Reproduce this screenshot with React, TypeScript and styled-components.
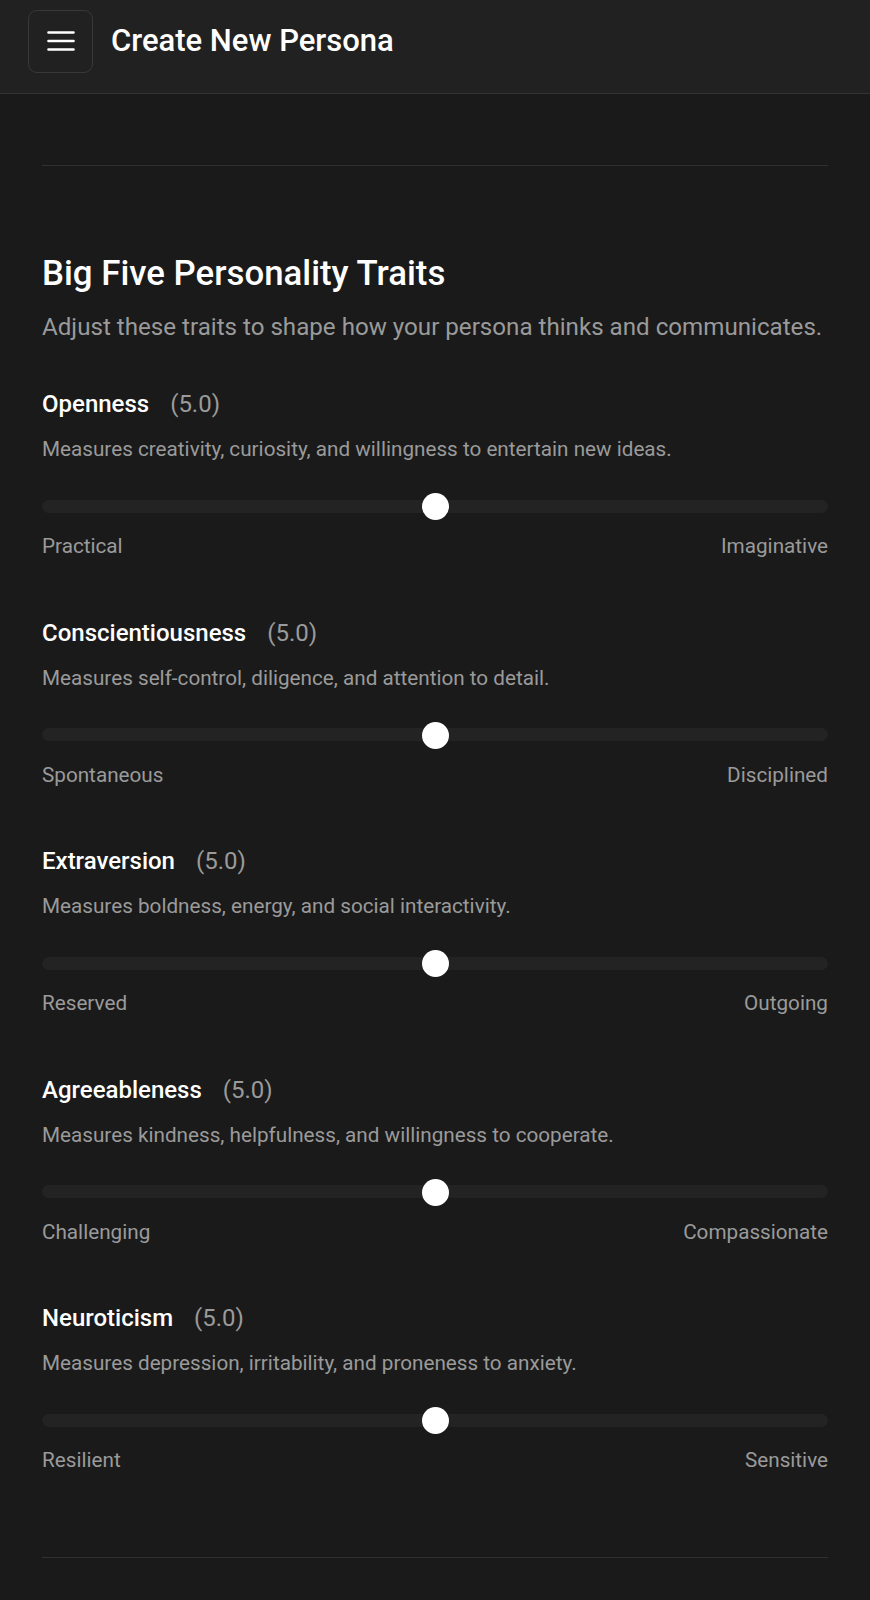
import React from "react";
import styled, { createGlobalStyle } from "styled-components";

const GlobalStyle = createGlobalStyle`
  html, body {
    margin: 0;
    padding: 0;
    background: #1a1a1a;
  }
  body {
    font-family: Roboto, "Liberation Sans", Arial, sans-serif;
    color: #ffffff;
    -webkit-font-smoothing: antialiased;
  }
  * { box-sizing: border-box; }
`;

const Page = styled.div`
  min-height: 1600px;
  background: #1a1a1a;
`;

const Header = styled.header`
  display: flex;
  align-items: center;
  gap: 18px;
  height: 94px;
  padding: 10px 28px 21px;
  background: #212121;
  border-bottom: 1px solid #333333;
`;

const MenuButton = styled.button`
  display: flex;
  align-items: center;
  justify-content: center;
  width: 65px;
  height: 63px;
  padding: 0;
  background: transparent;
  border: 1.5px solid #383838;
  border-radius: 9px;
  cursor: pointer;
`;

const Title = styled.h1`
  margin: 0;
  font-size: 31px;
  font-weight: 500;
  line-height: 36px;
  color: #ffffff;
`;

const Main = styled.main`
  padding: 0 42px;
`;

const Divider = styled.hr<{ $top: number }>`
  margin: ${(p) => p.$top}px 0 0;
  border: none;
  height: 1px;
  background: #303030;
`;

const Section = styled.section`
  display: flex;
  flex-direction: column;
  padding-top: 89px;
`;

const SectionTitle = styled.h2`
  margin: 0;
  font-size: 34.8px;
  line-height: 36px;
  font-weight: 500;
  color: #ffffff;
`;

const SectionSubtitle = styled.p`
  margin: 22px 0 0;
  font-size: 24.15px;
  line-height: 28px;
  color: #9a9a9a;
`;

const TraitList = styled.div`
  display: flex;
  flex-direction: column;
  gap: 59.5px;
  margin-top: 49px;
`;

const Trait = styled.div`
  display: flex;
  flex-direction: column;
`;

const TraitHeading = styled.div`
  display: flex;
  align-items: baseline;
  gap: 21px;
  line-height: 28px;
`;

const TraitName = styled.span`
  font-size: 24px;
  font-weight: 500;
  color: #ffffff;
`;

const TraitValue = styled.span`
  font-size: 24px;
  color: #9a9a9a;
`;

const TraitDescription = styled.p`
  margin: 18px 0 0;
  font-size: 20.7px;
  line-height: 26px;
  color: #9a9a9a;
`;

const SliderTrack = styled.div`
  position: relative;
  display: flex;
  align-items: center;
  height: 28px;
  margin-top: 30px;

  &::before {
    content: "";
    flex: 1;
    height: 13px;
    border-radius: 7px;
    background: #232323;
  }
`;

const Thumb = styled.div`
  position: absolute;
  top: 1px;
  width: 27px;
  height: 27px;
  margin-left: -13.5px;
  border-radius: 50%;
  background: #ffffff;
`;

const Ends = styled.div`
  display: flex;
  justify-content: space-between;
  margin-top: 13px;
  font-size: 20.7px;
  line-height: 26px;
  color: #9a9a9a;
`;

type TraitData = {
  name: string;
  value: number;
  description: string;
  low: string;
  high: string;
};

const traits: TraitData[] = [
  {
    name: "Openness",
    value: 5,
    description:
      "Measures creativity, curiosity, and willingness to entertain new ideas.",
    low: "Practical",
    high: "Imaginative",
  },
  {
    name: "Conscientiousness",
    value: 5,
    description: "Measures self-control, diligence, and attention to detail.",
    low: "Spontaneous",
    high: "Disciplined",
  },
  {
    name: "Extraversion",
    value: 5,
    description: "Measures boldness, energy, and social interactivity.",
    low: "Reserved",
    high: "Outgoing",
  },
  {
    name: "Agreeableness",
    value: 5,
    description:
      "Measures kindness, helpfulness, and willingness to cooperate.",
    low: "Challenging",
    high: "Compassionate",
  },
  {
    name: "Neuroticism",
    value: 5,
    description:
      "Measures depression, irritability, and proneness to anxiety.",
    low: "Resilient",
    high: "Sensitive",
  },
];

const MenuIcon = () => (
  <svg width="28" height="22" viewBox="0 0 28 22" fill="none">
    <path
      d="M1.5 2.5h25M1.5 11h25M1.5 19.5h25"
      stroke="#ffffff"
      strokeWidth="2.6"
      strokeLinecap="round"
    />
  </svg>
);

const TraitSlider = ({ trait }: { trait: TraitData }) => (
  <Trait>
    <TraitHeading>
      <TraitName>{trait.name}</TraitName>
      <TraitValue>({trait.value.toFixed(1)})</TraitValue>
    </TraitHeading>
    <TraitDescription>{trait.description}</TraitDescription>
    <SliderTrack>
      <Thumb style={{ left: `${(trait.value / 10) * 100}%` }} />
    </SliderTrack>
    <Ends>
      <span>{trait.low}</span>
      <span>{trait.high}</span>
    </Ends>
  </Trait>
);

export default function App() {
  return (
    <Page>
      <GlobalStyle />
      <Header>
        <MenuButton aria-label="Menu">
          <MenuIcon />
        </MenuButton>
        <Title>Create New Persona</Title>
      </Header>
      <Main>
        <Divider $top={71} />
        <Section>
          <SectionTitle>Big Five Personality Traits</SectionTitle>
          <SectionSubtitle>
            Adjust these traits to shape how your persona thinks and
            communicates.
          </SectionSubtitle>
          <TraitList>
            {traits.map((t) => (
              <TraitSlider key={t.name} trait={t} />
            ))}
          </TraitList>
        </Section>
        <Divider $top={84} />
      </Main>
    </Page>
  );
}
